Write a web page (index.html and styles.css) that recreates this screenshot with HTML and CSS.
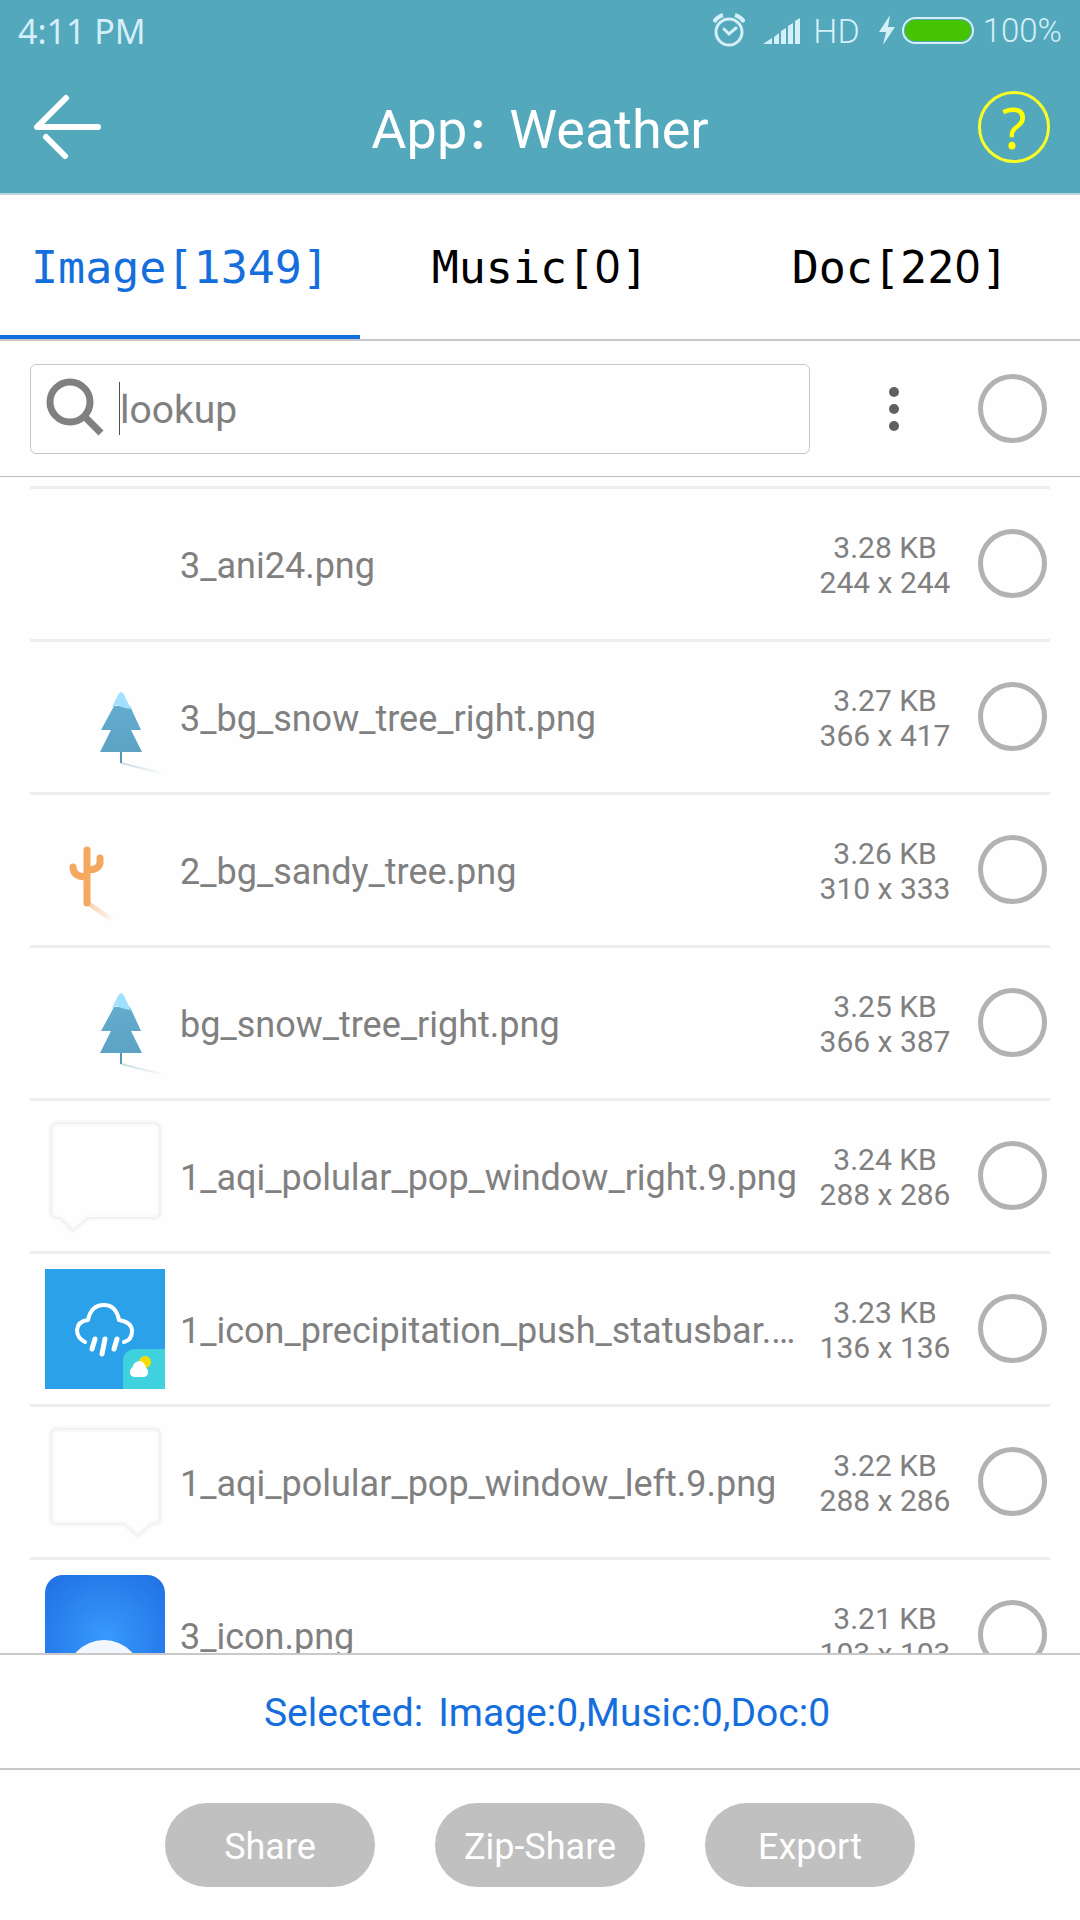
FILE: index.html
```html
<!DOCTYPE html>
<html lang="en">
<head>
<meta charset="utf-8">
<meta name="viewport" content="width=device-width, initial-scale=1">
<title>App：Weather</title>
<link rel="stylesheet" href="styles.css">
</head>
<body>
<svg class="defs" aria-hidden="true">
  <defs>
    <linearGradient id="fade-blue" x1="0" y1="0" x2="1" y2="0"><stop offset="0" stop-color="#c6d9e3"/><stop offset="1" stop-color="#ffffff"/></linearGradient>
    <linearGradient id="fade-sand" x1="0" y1="0" x2="1" y2="1"><stop offset="0" stop-color="#f3c9a4"/><stop offset="1" stop-color="#ffffff"/></linearGradient>
    <linearGradient id="fir" x1="0" y1="0" x2="0" y2="1"><stop offset="0" stop-color="#62acce"/><stop offset="1" stop-color="#5ca2c3"/></linearGradient>
    <radialGradient id="sky" gradientUnits="userSpaceOnUse" cx="60" cy="62" r="78"><stop offset="0" stop-color="#3899fc"/><stop offset="1" stop-color="#2173e5"/></radialGradient>
    <symbol id="tree" viewBox="0 0 120 120">
      <path d="M76 105L121 116L119 118L76 107Z" fill="url(#fade-blue)"/>
      <path d="M75 94h2v12h-2z" fill="#5796b3"/>
      <path d="M69 49L85 49L96 73H86L97 95H55L66 73H56Z" fill="url(#fir)"/>
      <path d="M76 35Q79 36 81 42L86 52Q78 51 74 49Q71 47 67 50L71 42Q74 35 76 35Z" fill="#a1e0fe"/>
    </symbol>
  </defs>
</svg>

<header class="top">
  <div class="status">
    <span class="clock">4:11 PM</span>
    <svg class="alarm" viewBox="0 0 32 34" aria-hidden="true"><g fill="none" stroke="#d5eff8"><circle cx="16" cy="19" r="13" stroke-width="3"/><path d="M11 16L16 21L23 15" stroke-width="3" stroke-linecap="round"/><path d="M1 9Q4 4 10 2M31 9Q28 4 22 2" stroke-width="4"/></g></svg>
    <svg class="signal" viewBox="0 0 38 27" aria-hidden="true"><path d="M0 27L9 21V27ZM11 20L16 16V27H11ZM18 14L23 11V27H18ZM25 9L30 6V27H25ZM32 4L37 1V27H32Z" fill="#d5eff8"/></svg>
    <span class="hd">HD</span>
    <svg class="bolt" viewBox="0 0 18 30" aria-hidden="true"><path d="M12 0L1 17H8L5 30L17 12H10Z" fill="#d5eff8"/></svg>
    <span class="battery"></span>
    <span class="percent">100%</span>
  </div>
  <div class="titlebar">
    <button class="back" type="button" aria-label="Back"><svg viewBox="0 0 72 72" aria-hidden="true"><path d="M36 7L7 36H68M16 46L35 65" fill="none" stroke="#fff" stroke-width="6" stroke-linecap="round" stroke-linejoin="round"/></svg></button>
    <h1 class="title">App<span class="colon">：</span>Weather</h1>
    <button class="help" type="button" aria-label="Help">?</button>
  </div>
</header>

<nav class="tabs">
  <button class="tab active" type="button">Image[1349]</button>
  <button class="tab" type="button">Music[<span class="zero">0</span>]</button>
  <button class="tab" type="button">Doc[22<span class="zero">0</span>]</button>
</nav>

<div class="tools">
  <label class="search">
    <svg class="lens" viewBox="0 0 58 58" aria-hidden="true"><g fill="none" stroke="#808080"><circle cx="24" cy="24" r="20" stroke-width="7"/><path d="M38 38L55 55" stroke-width="7"/></g></svg>
    <span class="caret"></span>
    <input class="field" type="text" placeholder="lookup" aria-label="lookup">
  </label>
  <button class="more" type="button" aria-label="More"><svg viewBox="0 0 12 46" aria-hidden="true"><g fill="#606060"><circle cx="6" cy="6" r="5"/><circle cx="6" cy="23" r="5"/><circle cx="6" cy="40" r="5"/></g></svg></button>
  <input class="tick" type="checkbox" aria-label="Select all">
</div>

<main class="files">
  <ul class="list">
    <li class="row">
      <svg class="thumb" viewBox="0 0 120 120" aria-hidden="true"></svg>
      <label class="name" for="f1">3_ani24.png</label>
      <p class="meta">3.28 KB<br>244 x 244</p>
      <input class="tick" type="checkbox" id="f1">
    </li>
    <li class="row">
      <svg class="thumb" viewBox="0 0 120 120" aria-hidden="true"><use href="#tree" width="120" height="120"/></svg>
      <label class="name" for="f2">3_bg_snow_tree_right.png</label>
      <p class="meta">3.27 KB<br>366 x 417</p>
      <input class="tick" type="checkbox" id="f2">
    </li>
    <li class="row">
      <svg class="thumb" viewBox="0 0 120 120" aria-hidden="true"><path d="M39 93L45 92L70 109L65 112Z" fill="url(#fade-sand)"/><g fill="none" stroke="#f4a860" stroke-width="7"><path d="M42 93V40M42 43V40M28 57Q28 67 42 67M55 48V53Q54 60 42 60" stroke-linecap="round"/></g></svg>
      <label class="name" for="f3">2_bg_sandy_tree.png</label>
      <p class="meta">3.26 KB<br>310 x 333</p>
      <input class="tick" type="checkbox" id="f3">
    </li>
    <li class="row">
      <svg class="thumb" viewBox="0 5 120 120" aria-hidden="true"><use href="#tree" width="120" height="120"/></svg>
      <label class="name" for="f4">bg_snow_tree_right.png</label>
      <p class="meta">3.25 KB<br>366 x 387</p>
      <input class="tick" type="checkbox" id="f4">
    </li>
    <li class="row">
      <svg class="thumb" viewBox="0 0 120 120" aria-hidden="true"><g fill="none" stroke-linejoin="round"><path d="M13 7H108Q115 7 115 14V96Q115 102 108 102H43L28 115L15 102H13Q6 102 6 96V14Q6 7 13 7Z" stroke="#fafafa" stroke-width="6"/><path d="M13 7H108Q115 7 115 14V96Q115 102 108 102H43L28 115L15 102H13Q6 102 6 96V14Q6 7 13 7Z" stroke="#f1f1f1" stroke-width="2"/></g></svg>
      <label class="name" for="f5">1_aqi_polular_pop_window_right.9.png</label>
      <p class="meta">3.24 KB<br>288 x 286</p>
      <input class="tick" type="checkbox" id="f5">
    </li>
    <li class="row">
      <svg class="thumb" viewBox="0 0 120 120" aria-hidden="true"><path d="M0 0H120V120H0Z" fill="#2aa1e8"/><g fill="none" stroke="#fff" stroke-width="4" stroke-linecap="round" stroke-linejoin="round"><path d="M40 73Q32 69 32 61Q33 52 43 51Q46 36 59 36Q71 36 74 51Q87 53 87 62Q87 71 79 73"/><path d="M50 70L47 80M60 70L57 85M72 70L69 80" stroke-width="5"/></g><path d="M78 120V92Q78 80 92 80H120V120Z" fill="#40d1de"/><circle cx="100" cy="93" r="6" fill="#f7dc00"/><path d="M89 108A5 5 0 0 1 87 99Q89 92 95 92Q100 93 101 99A5 5 0 0 1 99 108Z" fill="#fff"/></svg>
      <label class="name" for="f6">1_icon_precipitation_push_statusbar.png</label>
      <p class="meta">3.23 KB<br>136 x 136</p>
      <input class="tick" type="checkbox" id="f6">
    </li>
    <li class="row">
      <svg class="thumb" viewBox="0 0 120 120" aria-hidden="true"><g fill="none" stroke-linejoin="round"><path d="M13 7H108Q115 7 115 14V96Q115 102 108 102H106L93 114L79 102H13Q6 102 6 96V14Q6 7 13 7Z" stroke="#fafafa" stroke-width="6"/><path d="M13 7H108Q115 7 115 14V96Q115 102 108 102H106L93 114L79 102H13Q6 102 6 96V14Q6 7 13 7Z" stroke="#f1f1f1" stroke-width="2"/></g></svg>
      <label class="name" for="f7">1_aqi_polular_pop_window_left.9.png</label>
      <p class="meta">3.22 KB<br>288 x 286</p>
      <input class="tick" type="checkbox" id="f7">
    </li>
    <li class="row">
      <svg class="thumb" viewBox="0 0 120 120" aria-hidden="true"><rect width="120" height="120" rx="18" fill="url(#sky)"/><circle cx="59" cy="103" r="38" fill="#f2f7fe"/></svg>
      <label class="name" for="f8">3_icon.png</label>
      <p class="meta">3.21 KB<br>103 x 103</p>
      <input class="tick" type="checkbox" id="f8">
    </li>
  </ul>
</main>

<p class="selected"><span>Selected:</span><span>Image:0,Music:0,Doc:0</span></p>

<footer class="actions">
  <button class="pill" type="button">Share</button>
  <button class="pill" type="button">Zip-Share</button>
  <button class="pill" type="button">Export</button>
</footer>
</body>
</html>
```

FILE: styles.css
```css
* { box-sizing: border-box; }

body {
  margin: 0;
  height: 100vh;
  display: flex;
  flex-direction: column;
  background: #fefefe;
  color: #808080;
  font-family: Roboto, "Noto Sans CJK SC", sans-serif;
}

button, input { font: inherit; margin: 0; padding: 0; border: 0; background: none; }
svg { display: block; flex: none; }
h1, p, ul { margin: 0; padding: 0; }
.defs { position: absolute; width: 0; height: 0; }

.top { background: #53a8bc; border-bottom: 2px solid #b9d4dc; }

.status {
  display: flex;
  align-items: center;
  height: 60px;
  padding: 0 18px;
  color: #d5eff8;
  font: 34px/60px "Noto Sans", "Open Sans", sans-serif;
}
.clock { margin-right: auto; padding-top: 1px; }
.alarm { width: 32px; height: 34px; margin-right: 18px; }
.signal { width: 38px; height: 27px; margin-right: 12px; }
.hd, .percent { font-family: Roboto, sans-serif; font-weight: 300; padding-top: 2px; }
.hd { margin-right: 18px; }
.percent { font-size: 33px; }
.bolt { width: 18px; height: 30px; margin-right: 6px; }
.battery {
  width: 72px;
  height: 27px;
  margin-right: 9px;
  border: 2px solid #d5eff8;
  border-radius: 14px;
  background: #46c301;
  box-shadow: inset 0 0 0 1px #53a8bc;
}

.titlebar {
  display: flex;
  align-items: center;
  justify-content: space-between;
  height: 133px;
  padding: 0 30px;
}
.back { width: 72px; height: 72px; }
.title { padding-top: 6px; color: #fff; font-size: 54px; font-weight: 400; line-height: 64px; }
.colon { font: 700 42px/42px "Noto Sans CJK SC", sans-serif; }
.help {
  width: 72px;
  height: 72px;
  border: 3px solid #f7ff26;
  border-radius: 50%;
  color: #ffff00;
  font: 57px/64px "Noto Sans", sans-serif;
}

.tabs { display: grid; grid-template-columns: repeat(3, 1fr); border-bottom: 2px solid #c9c9c9; }
.tab {
  height: 144px;
  padding-top: 6px;
  border-bottom: 4px solid transparent;
  color: #000;
  font: 45px/60px "DejaVu Sans Mono", monospace;
}
.active { color: #146edc; border-color: #146edc; }
.zero { display: inline-block; width: 27px; font-family: "Noto Sans", sans-serif; line-height: 56px; }

.tools {
  display: flex;
  align-items: center;
  height: 136px;
  padding: 0 33px 0 30px;
  border-bottom: 1px solid #bebebe;
}
.search {
  display: flex;
  align-items: center;
  flex: 1;
  height: 90px;
  padding: 0 15px;
  border: 1px solid #c8c8c8;
  border-radius: 6px;
}
.lens { width: 58px; height: 58px; margin: 0 15px 4px 0; }
.caret { width: 1px; height: 53px; background: #505050; }
.field { flex: 1; min-width: 0; height: 60px; padding-top: 2px; font-size: 39px; outline: 0; }
.field::placeholder { color: #808080; opacity: 1; }
.more { width: 12px; height: 46px; margin: 0 78px; }

.tick {
  flex: none;
  appearance: none;
  width: 69px;
  height: 69px;
  border: 5px solid #b2b2b2;
  border-radius: 50%;
}
.tick:checked { background: #146edc; }

.files { flex: 1; min-height: 0; overflow: hidden; padding: 9px 30px 0; }
.list { list-style: none; }
.row {
  display: flex;
  align-items: center;
  height: 153px;
  padding: 0 3px 0 15px;
  border-top: 3px solid #ededed;
}
.row .tick { margin-bottom: 2px; }
.thumb { width: 120px; height: 120px; margin-right: 15px; }
.name {
  flex: 1;
  min-width: 0;
  padding-top: 4px;
  overflow: hidden;
  white-space: nowrap;
  text-overflow: ellipsis;
  font-size: 36px;
  line-height: 48px;
}
.meta {
  width: 138px;
  margin: 0 24px 0 18px;
  padding-top: 2px;
  text-align: center;
  white-space: nowrap;
  font-size: 30px;
  line-height: 35px;
}

.selected {
  display: flex;
  justify-content: center;
  gap: 15px;
  padding: 3px 0 0 14px;
  border: solid #c9c9c9;
  border-width: 2px 0;
  color: #146edc;
  font-size: 39px;
  line-height: 110px;
}

.actions { display: flex; justify-content: center; gap: 60px; padding: 33px 0; }
.pill {
  width: 210px;
  height: 84px;
  padding-top: 3px;
  border-radius: 42px;
  background: #c0c0c0;
  color: #fff;
  font-size: 36px;
}
```
